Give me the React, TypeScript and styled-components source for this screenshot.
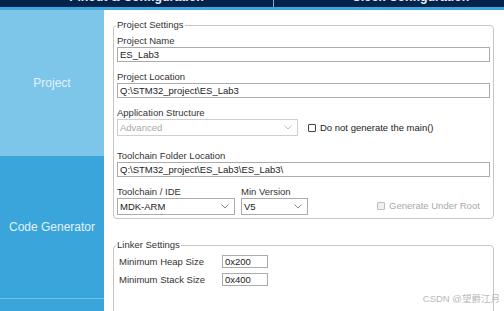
import React from 'react';
import styled, { createGlobalStyle } from 'styled-components';

const GlobalStyle = createGlobalStyle`
    html, body {
        margin: 0;
        padding: 0;
        overflow: hidden;
        background: #ffffff;
    }
    body {
        font-family: "Liberation Sans", Arial, sans-serif;
    }
`;

const Window = styled.div`
    width: 504px;
    height: 311px;
    display: flex;
    flex-direction: column;
    overflow: hidden;
    position: relative;
`;

const TopBar = styled.div`
    height: 7px;
    flex: none;
    display: flex;
    background: #03234b;
    overflow: hidden;
`;

const TopTab = styled.div<{ $divider?: boolean }>`
    flex: none;
    width: 273px;
    text-align: center;
    color: #e8eef5;
    font-size: 12.3px;
    font-weight: bold;
    line-height: 14px;
    white-space: nowrap;
    border-right: ${(p) => (p.$divider ? '1px solid #9aa8ba' : 'none')};
    span {
        display: block;
        margin-top: -10px;
    }
`;

const Stripe = styled.div`
    height: 3px;
    flex: none;
    background: #3ea8de;
`;

const Body = styled.div`
    flex: 1;
    display: flex;
    min-height: 0;
`;

const Sidebar = styled.div`
    width: 104px;
    flex: none;
    display: flex;
    flex-direction: column;
    background: #3aa5da;
`;

const SideItem = styled.div<{ $active?: boolean; $h?: number; $line?: boolean }>`
    height: ${(p) => (p.$h ? `${p.$h}px` : 'auto')};
    flex: ${(p) => (p.$h ? 'none' : '1')};
    display: flex;
    align-items: center;
    justify-content: center;
    background: ${(p) => (p.$active ? '#7ec5ea' : '#3aa5da')};
    border-top: ${(p) => (p.$line ? '1px solid #72c0e8' : 'none')};
    color: #e2f2fb;
    font-size: 12px;
`;

const Content = styled.div`
    flex: 1;
    padding: 0 10px 0 9px;
    background: #ffffff;
    color: #333333;
    font-size: 9.5px;
`;

const Group = styled.fieldset<{ $top: number }>`
    margin: ${(p) => p.$top}px 0 0 0;
    padding: 4px 3px 3px 3px;
    border: 1px solid #c6c6c6;
    border-radius: 4px;
    min-width: 0;
`;

const Legend = styled.legend`
    font-size: 9.5px;
    line-height: 12px;
    padding: 0 1px;
    margin-left: -1px;
    color: #333333;
`;

const Stack = styled.div`
    display: flex;
    flex-direction: column;
`;

const Label = styled.div<{ $gap?: number }>`
    height: 12px;
    line-height: 12px;
    margin-top: ${(p) => p.$gap || 0}px;
    white-space: nowrap;
`;

const TextInput = styled.div<{ $w?: number; $h?: number }>`
    box-sizing: border-box;
    width: ${(p) => (p.$w ? `${p.$w}px` : '100%')};
    height: ${(p) => p.$h || 15}px;
    border: 1px solid #ababab;
    background: #ffffff;
    padding: 0 2px;
    display: flex;
    align-items: center;
    color: #222222;
    font-size: 9.5px;
    white-space: nowrap;
    overflow: hidden;
`;

const Select = styled.div<{ $w: number; $disabled?: boolean }>`
    box-sizing: border-box;
    width: ${(p) => p.$w}px;
    height: 17px;
    border: 1px solid ${(p) => (p.$disabled ? '#cfcfcf' : '#ababab')};
    background: #ffffff;
    padding: 0 5px 0 2px;
    display: flex;
    align-items: center;
    justify-content: space-between;
    color: ${(p) => (p.$disabled ? '#a8a8a8' : '#222222')};
    font-size: 9.5px;
    flex: none;
`;

const Row = styled.div<{ $gap?: number }>`
    display: flex;
    align-items: center;
    margin-top: ${(p) => p.$gap || 0}px;
`;

const BottomRow = styled.div`
    display: flex;
    align-items: flex-end;
`;

const Column = styled.div<{ $ml?: number }>`
    display: flex;
    flex-direction: column;
    margin-left: ${(p) => p.$ml || 0}px;
`;

const Check = styled.div<{ $disabled?: boolean; $ml: number }>`
    display: flex;
    align-items: center;
    gap: 4px;
    margin-left: ${(p) => p.$ml}px;
    color: ${(p) => (p.$disabled ? '#a9a9a9' : '#222222')};
    white-space: nowrap;
`;

const Box = styled.span<{ $disabled?: boolean }>`
    box-sizing: border-box;
    width: 8px;
    height: 8px;
    border: 1px solid ${(p) => (p.$disabled ? '#bdbdbd' : '#444444')};
    background: ${(p) => (p.$disabled ? '#efefef' : '#ffffff')};
    border-radius: 1px;
`;

const LinkerRow = styled.div<{ $gap?: number }>`
    display: grid;
    grid-template-columns: 105px 46px;
    align-items: center;
    margin-top: ${(p) => p.$gap || 0}px;
    span {
        padding-left: 2px;
    }
`;

const Watermark = styled.div`
    position: absolute;
    right: 4px;
    bottom: 6px;
    font-family: "Liberation Sans", "Noto Sans CJK SC", sans-serif;
    font-size: 9.5px;
    color: #b9b9b9;
`;

const Chevron = ({ color = '#7a7a7a' }: { color?: string }) => (
    <svg width="8" height="5" viewBox="0 0 8 5">
        <path d="M0.5 0.5 L4 4 L7.5 0.5" fill="none" stroke={color} strokeWidth="0.9" />
    </svg>
);

export default function App() {
    return (
        <Window>
            <GlobalStyle />
            <TopBar>
                <TopTab $divider><span>Pinout &amp; Configuration</span></TopTab>
                <TopTab><span>Clock Configuration</span></TopTab>
            </TopBar>
            <Stripe />
            <Body>
                <Sidebar>
                    <SideItem $active $h={146}>Project</SideItem>
                    <SideItem $h={142}>Code Generator</SideItem>
                    <SideItem $line />
                </Sidebar>
                <Content>
                    <Group $top={9}>
                        <Legend>Project Settings</Legend>
                        <Stack>
                            <Label>Project Name</Label>
                            <TextInput>ES_Lab3</TextInput>

                            <Label $gap={9}>Project Location</Label>
                            <TextInput>Q:\STM32_project\ES_Lab3</TextInput>

                            <Label $gap={9}>Application Structure</Label>
                            <Row>
                                <Select $w={181} $disabled>
                                    Advanced
                                    <Chevron color="#b5b5b5" />
                                </Select>
                                <Check $ml={10}>
                                    <Box />
                                    Do not generate the main()
                                </Check>
                            </Row>

                            <Label $gap={14}>Toolchain Folder Location</Label>
                            <TextInput>Q:\STM32_project\ES_Lab3\ES_Lab3\</TextInput>

                            <BottomRow>
                                <Column>
                                    <Label $gap={9}>Toolchain / IDE</Label>
                                    <Select $w={118}>
                                        MDK-ARM
                                        <Chevron />
                                    </Select>
                                </Column>
                                <Column $ml={6}>
                                    <Label>Min Version</Label>
                                    <Select $w={67}>
                                        V5
                                        <Chevron />
                                    </Select>
                                </Column>
                                <Check $ml={69} $disabled style={{ marginBottom: 4 }}>
                                    <Box $disabled />
                                    Generate Under Root
                                </Check>
                            </BottomRow>
                        </Stack>
                    </Group>

                    <Group $top={20}>
                        <Legend>Linker Settings</Legend>
                        <LinkerRow>
                            <span>Minimum Heap Size</span>
                            <TextInput $w={46} $h={13}>0x200</TextInput>
                        </LinkerRow>
                        <LinkerRow $gap={5}>
                            <span>Minimum Stack Size</span>
                            <TextInput $w={46} $h={13}>0x400</TextInput>
                        </LinkerRow>
                        <Stack style={{ height: 40 }} />
                    </Group>
                </Content>
            </Body>
            <Watermark>CSDN @望爵江月</Watermark>
        </Window>
    );
}
